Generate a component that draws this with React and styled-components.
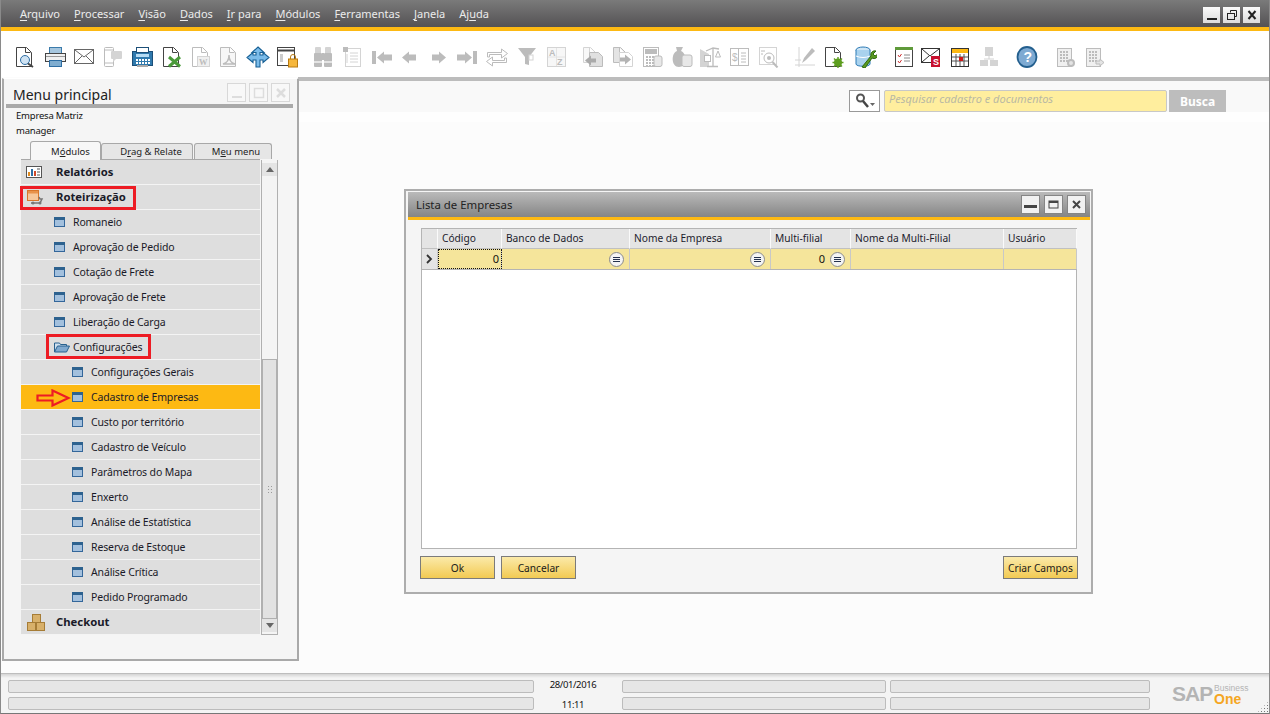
import React from "react";
import styled, { createGlobalStyle } from "styled-components";

const FONT = '"Noto Sans", "DejaVu Sans", sans-serif';

const Global = createGlobalStyle`
  html, body { margin: 0; padding: 0; background: #fff; overflow: hidden; }
  * { box-sizing: border-box; }
`;

const Win = styled.div`
  position: relative; width: 1270px; height: 714px; overflow: hidden;
  background: #fcfcfc; font-family: ${FONT}; font-size: 10.500px; color: #1c1c28;
  &::after {
    content: ""; position: absolute; inset: 0; pointer-events: none; z-index: 20;
    border-left: 1px solid #8a8a8a; border-right: 1px solid #8a8a8a; border-bottom: 1px solid #777;
  }
`;
const TitleBar = styled.div`
  position: absolute; left: 0; right: 0; top: 0; height: 31px;
  background: linear-gradient(#7a7a7a, #545254);
  border-bottom: 4px solid #fdb913;
`;
const MenuBar = styled.nav`
  position: absolute; left: 20px; top: 6px; display: flex; gap: 14px;
  color: #ececec; font-size: 11px; line-height: 16px;
  u { text-underline-offset: 2px; text-decoration-thickness: 1px; }
`;
const WinBtns = styled.div`
  position: absolute; right: 10px; top: 7px; display: flex; gap: 3px;
`;
const WinBtn = styled.div`
  width: 17px; height: 16px; background: linear-gradient(#fafafa, #dcdcdc);
  display: flex; align-items: center; justify-content: center;
`;
const Toolbar = styled.div`
  position: absolute; left: 0; right: 0; top: 31px; height: 46px; background: #fff;
`;
const Tool = styled.div`
  position: absolute; top: 13px; width: 24px; height: 24px; left: ${p => p.$x - 12}px;
  svg { display: block; }
`;
const Rule = styled.div`
  position: absolute; left: 298px; right: 1px; top: 77px; height: 4px; background: #bcbcbc;
`;
const SearchStrip = styled.div`
  position: absolute; left: 298px; right: 0; top: 81px; height: 41px;
  background: linear-gradient(#f9f9f9 31px, #fefefe 31px);
`;
const SearchBtn = styled.div`
  position: absolute; left: 849px; top: 90px; width: 31px; height: 22px; background: #fff;
  border: 1px solid #999; display: flex; align-items: center; justify-content: center;
`;
const SearchInput = styled.div`
  position: absolute; left: 884px; top: 90px; width: 283px; height: 22px; background: #ffee9e;
  border: 1px solid #c8c8c8; border-radius: 2px; color: #b9b9a4; font-style: italic; font-size: 11px;
  padding-left: 4px; line-height: 15px;
`;
const BuscaBtn = styled.div`
  position: absolute; left: 1169px; top: 90px; width: 57px; height: 22px; background: #bdbdbd;
  color: #fff; font-weight: 700; font-size: 12px; text-align: center; line-height: 23px;
`;

const Panel = styled.aside`
  position: absolute; left: 2px; top: 78px; width: 297px; height: 583px; background: #f5f5f5;
  border: 2px solid #a9a9a9; border-top-color: #fff; border-top-width: 1px;
`;
const PanelTitle = styled.div`
  position: absolute; left: 9px; top: 6px; font-size: 14px; line-height: 20px; color: #222;
`;
const PanelBtn = styled.div`
  position: absolute; top: 4px; left: ${p => p.$x}px; width: 19px; height: 19px;
  border: 1px solid #d8d8d8; background: #f8f8f8;
  display: flex; align-items: center; justify-content: center;
`;
const PanelRule = styled.div`
  position: absolute; left: 2px; width: 287px; top: 25px; height: 4px; background: #a9a9a9;
`;
const UserLine = styled.div`
  position: absolute; left: 12px; top: ${p => p.$y}px; font-size: 9.500px; letter-spacing: -0.2px; line-height: 14px; color: #111;
`;
const Tab = styled.div`
  position: absolute; left: ${p => p.$x}px; width: ${p => p.$w}px;
  top: ${p => (p.$active ? 62 : 64)}px; height: ${p => (p.$active ? 19 : 16)}px;
  background: ${p => (p.$active ? "#f7f7f7" : "#e6e6e6")};
  border: 1px solid #a8a8a8; border-bottom: none; border-radius: 3px 3px 0 0;
  text-align: center; font-size: 9.500px; line-height: 16px; color: #222; white-space: nowrap;
  padding-top: ${p => (p.$active ? 2 : 0)}px; padding-left: ${p => p.$pad}px;
  z-index: ${p => (p.$active ? 2 : 1)};
`;
const Tree = styled.div`
  position: absolute; left: 17px; top: 80px; width: 239px; height: 475px;
  border-top: 1px solid #a8a8a8; display: flex; flex-direction: column;
`;
const Row = styled.div`
  position: relative; height: 25px; flex: none;
  background: ${p => (p.$sel ? "#fdb913" : "#dedede")};
  border-bottom: 1px solid #f4f4f4;
  font-size: ${p => (p.$top ? "11.300px" : "10.500px")};
  letter-spacing: ${p => (p.$top ? "0" : "-0.13px")};
  font-weight: ${p => (p.$top ? 700 : 400)}; line-height: 24px;
  color: #1a1a28; white-space: nowrap;
  padding-left: ${p => p.$text}px;
`;
const RowIcon = styled.div`
  position: absolute; top: ${p => p.$top}px; left: ${p => p.$x}px;
  svg { display: block; }
`;
const Scroll = styled.div`
  position: absolute; left: 257px; top: 81px; width: 17px; height: 475px;
  background: #f4f4f4; border: 1px solid #b0b0b0; border-top: none;
`;
const ScrollArrow = styled.div`
  position: absolute; left: 0; width: 15px; height: 13px; background: #e4e4e4;
  top: ${p => (p.$down ? "auto" : "3px")}; bottom: ${p => (p.$down ? "2px" : "auto")};
  display: flex; align-items: center; justify-content: center;
`;
const Thumb = styled.div`
  position: absolute; left: 0; width: 15px; top: 199px; height: 260px; background: #e2e2e2;
  border: 1px solid #b0b0b0; display: flex; align-items: center; justify-content: center;
`;
const Grip = styled.div`
  width: 6px; height: 8px;
  background-image: radial-gradient(#9a9a9a 0.7px, transparent 0.8px);
  background-size: 3px 3px;
`;
const RedBox = styled.div`
  position: absolute; left: ${p => p.$x}px; top: ${p => p.$y}px; width: ${p => p.$w}px; height: ${p => p.$h}px;
  border: 3px solid #ed1c24; pointer-events: none; z-index: 5;
`;
const Arrow = styled.svg`
  position: absolute; left: 36px; top: 389px; z-index: 5;
`;

const Dialog = styled.section`
  position: absolute; left: 404px; top: 189px; width: 689px; height: 405px;
  background: #f5f5f5; border: 2px solid #adadad;
`;
const DlgHead = styled.div`
  position: absolute; left: 2px; right: 1px; top: 1px; height: 28px;
  background: linear-gradient(#bababa, #858585); border-bottom: 3px solid #fdb913;
  font-size: 11.400px; line-height: 25px; padding-left: 8px; color: #222;
`;
const DlgBtns = styled.div`
  position: absolute; right: 4px; top: 3px; display: flex; gap: 4px;
`;
const DlgBtn = styled.div`
  width: 19px; height: 19px; background: #f1f1f1; border: 1px solid #858585;
  display: flex; align-items: center; justify-content: center;
`;
const Grid = styled.div`
  position: absolute; left: 15px; top: 37px; width: 656px; height: 321px; background: #fff;
  border: 1px solid #b4b4b4;
`;
const COLS = "16px 64px 128px 141px 80px 153px 73px";
const HeadRow = styled.div`
  display: grid; grid-template-columns: ${COLS}; height: 20px;
`;
const HeadCell = styled.div`
  background: #e4e4e4; border-right: 1px solid #fafafa; border-bottom: 1px solid #c0c0c0;
  font-size: 10.200px; line-height: 18px; padding-left: 4px; color: #1c1c2c; white-space: nowrap;
`;
const DataRow = styled.div`
  display: grid; grid-template-columns: ${COLS}; height: 21px; border-bottom: 1px solid #b4b4b4;
`;
const Cell = styled.div`
  position: relative; background: #f5e59b; border-right: 1px solid #c8c8c8;
  font-size: 11px; line-height: 19px; text-align: right; color: #111; padding-right: ${p => p.$pad || 2}px;
  ${p => p.$focus && "outline: 1px dotted #111; outline-offset: -1px;"}
`;
const HeadMark = styled(Cell)`
  background: #e4e4e4; display: flex; align-items: center; justify-content: center; padding: 0;
`;
const Picker = styled.div`
  position: absolute; right: 5px; top: 3px; width: 15px; height: 15px; border-radius: 50%;
  background: #f4f4f4; border: 1px solid #8a8a8a;
  display: flex; flex-direction: column; align-items: center; justify-content: center; gap: 1px;
  i { display: block; width: 7px; height: 1px; background: #26334f; }
`;
const Btn = styled.div`
  position: absolute; left: ${p => p.$x}px; top: 365px; width: ${p => p.$w}px; height: 23px;
  background: linear-gradient(#fbeaa9, #f2ca53); border: 1px solid #7b7b7b;
  font-size: 10.200px; line-height: 22px; text-align: center; color: #1a1a1a; white-space: nowrap;
`;

const Status = styled.footer`
  position: absolute; left: 0; right: 0; top: 673px; bottom: 0;
  background: linear-gradient(#d4d4d4, #f4f4f4 4px); border-top: 1px solid #bdbdbd;
`;
const Seg = styled.div`
  position: absolute; left: ${p => p.$x}px; width: ${p => p.$w}px; top: ${p => p.$y}px; height: 13px;
  background: #e6e6e6; border: 1px solid #bcbcbc; border-radius: 2px;
`;
const Stamp = styled.div`
  position: absolute; left: 534px; width: 78px; top: ${p => p.$y}px; text-align: center;
  font-size: 9.500px; letter-spacing: -0.4px; line-height: 12px; color: #111;
`;
const Logo = styled.div`
  position: absolute; left: 1172px; top: 10px; width: 80px; height: 22px;
`;
const LogoSap = styled.span`
  position: absolute; left: 0; top: -1px; font-family: "Liberation Sans", sans-serif; font-weight: 700;
  font-size: 21px; line-height: 22px; color: #b4b4b4; letter-spacing: -1px;
`;
const LogoBiz = styled.span`
  position: absolute; left: 42px; top: 0; font-family: "Liberation Sans", sans-serif; font-size: 8.500px; line-height: 9px; color: #b4b4b4;
`;
const LogoOne = styled.span`
  position: absolute; left: 42px; top: 9px; font-family: "Liberation Sans", sans-serif; font-weight: 700; font-size: 14px; line-height: 12px; color: #f5a623;
`;
const ResizeGrip = styled.div`
  position: absolute; right: 1px; bottom: 1px; width: 12px; height: 12px;
  background-image: radial-gradient(#777 0.6px, transparent 0.7px); background-size: 3px 3px;
  clip-path: polygon(100% 0, 100% 100%, 0 100%);
`;

const G = "#bcbcbc";
const L = "#d4d4d4";
const S = ({ children, w = 24, h = 24, vb }) => (
  <svg width={w} height={h} viewBox={vb || `0 0 ${w} ${h}`} fill="none">{children}</svg>
);
const Doc = ({ c = "#444", x = 3, w = 15, h = 19, y = 3, f = "#fff" }) => (
  <path d={`M${x + .5} ${y + .5}h${w - 5}l5 5v${h - 5}h-${w}z M${x + w - 5.5} ${y + .5}v5h5`} stroke={c} fill={f} />
);
const GridDots = ({ x, y, c = G, n = 3, m = 4 }) => (
  <g fill={c}>{Array.from({ length: n * m }, (_, i) => <rect key={i} x={x + (i % n) * 3} y={y + Math.floor(i / n) * 3} width="2" height="2" />)}</g>
);

const icons = {
  searchDoc: <><Doc /><circle cx="12" cy="16" r="4.500" stroke="#2d6da3" fill="#cfe3f3" /><path d="M15 19.500l5 3.500" stroke="#444" strokeWidth="2" /></>,
  print: <><rect x="6.500" y="3.500" width="12" height="6" fill="#a6c6de" stroke="#3b7bab" /><rect x="2.500" y="9.500" width="20" height="8" fill="#f0f0f0" stroke="#444" /><rect x="6.500" y="16.500" width="12" height="6" fill="#7fadd0" stroke="#2d6da3" /><path d="M3 12.500h19" stroke="#999" /></>,
  mail: <><rect x="2.500" y="5.500" width="19" height="14" fill="#fff" stroke="#666" /><path d="M3 6l9 7 9-7M3 19l7-7M21 19l-7-7" stroke="#666" /></>,
  phone: <><rect x="3.500" y="3.500" width="9" height="19" rx="1" fill="#fff" stroke={G} /><path d="M4 6h8M4 19h8" stroke={G} /><rect x="10" y="7" width="11" height="8" rx="1" fill={L} /><path d="M12 15v3l3-3" fill={L} /></>,
  fax: <><rect x="2.500" y="7.500" width="20" height="14" fill="#2f79ad" stroke="#1c4f78" /><rect x="6.500" y="3.500" width="12" height="5" fill="#fff" stroke="#1c4f78" /><rect x="6" y="10" width="13" height="3" fill="#b7dcf4" /><GridDots x={6} y={15} c="#fff" n={5} m={2} /><rect x="7" y="21" width="11" height="2" fill="#aaa" /></>,
  excel: <><Doc /><path d="M9 13l11 9.500M20 13L9 22.500" stroke="#4a9a3a" strokeWidth="3" /></>,
  word: <><Doc c={G} /><rect x="8.500" y="12.500" width="12" height="10" fill="#f0f0f0" stroke={L} /><text x="10" y="21" fontSize="8.500" fontWeight="700" fontFamily="Liberation Serif, serif" fill={G}>W</text></>,
  pdf: <><Doc c={G} f="#f7f7f7" /><path d="M6 20c4-1 6-5 6-9 0 4 2 8 6 9-4 0-8 0-12 0z" stroke={G} strokeWidth="1.500" fill="none" /></>,
  arrows: <><path d="M12 3l6 5.500h-4V11h3V8.500l6 5-6 5V16h-3v7h-4v-7H7v2.500l-6-5 6-5V11h3V8.500H6z" fill="#7bbcea" stroke="#165f94" strokeWidth="1.100" /></>,
  lockWin: <><rect x="2.500" y="3.500" width="17" height="18" fill="#fff" stroke="#444" /><path d="M3 6.500h16" stroke="#444" strokeWidth="2" /><rect x="5" y="10" width="3" height="8" fill="#ccc" /><rect x="13.500" y="15" width="9" height="8" fill="#f6b73c" stroke="#b97a10" /><path d="M15.500 15v-2a2.500 2.500 0 015 0v2" stroke="#b97a10" /></>,
  binoc: <><rect x="4" y="3" width="6" height="8" rx="1" fill={L} /><rect x="14" y="3" width="6" height="8" rx="1" fill={L} /><rect x="3" y="9" width="8" height="14" rx="1" fill={G} /><rect x="13" y="9" width="8" height="14" rx="1" fill={G} /><rect x="11" y="9" width="2" height="7" fill={G} /><rect x="3" y="17" width="8" height="2" fill="#e4e4e4" /><rect x="13" y="17" width="8" height="2" fill="#e4e4e4" /></>,
  list: <><rect x="5.500" y="4.500" width="15" height="18" fill="#fff" stroke={L} /><rect x="3" y="3" width="5" height="5" fill={G} /><path d="M10 9h8M10 12h8M10 15h8M10 18h8M7 10v9" stroke={L} /></>,
  first: <><rect x="2" y="7" width="4" height="13" fill={G} /><path d="M7 13.500l7-6v3h8v6h-8v3z" fill={G} /></>,
  prev: <path d="M5 13.500l7-6v3h7v6h-7v3z" fill={G} />,
  next: <path d="M19 13.500l-7-6v3H5v6h7v3z" fill={G} />,
  last: <><rect x="18" y="7" width="4" height="13" fill={G} /><path d="M17 13.500l-7-6v3H2v6h8v3z" fill={G} /></>,
  swap: <><path d="M2.500 13V8.500h14V5l6 4.500-6 4.500v-3.500h-12V13z" fill="#fff" stroke={G} /><path d="M21.500 14v4.500h-14V22l-6-4.500 6-4.500v3.500h12V14z" fill="#fff" stroke={G} /></>,
  filter: <><path d="M3 4h18l-7 9v8l-4-1v-7z" fill={G} /><rect x="14" y="11" width="4" height="5" fill="#fff" stroke={L} /></>,
  sort: <><rect x="3.500" y="3.500" width="18" height="19" fill="#f7f7f7" stroke={L} /><path d="M12.500 4v18M4 13h17" stroke="#e4e4e4" /><text x="5" y="12" fontSize="9" fontWeight="700" fontFamily="Liberation Sans, sans-serif" fill={G}>A</text><text x="13" y="21" fontSize="9" fontWeight="700" fontFamily="Liberation Sans, sans-serif" fill={G}>Z</text></>,
  copyL: <><Doc c={L} x={2} w={12} h={15} f="#f8f8f8" /><path d="M8.500 8.500h9l4 4v10h-13z" fill="#e0e0e0" stroke={G} /><path d="M4 16.500l6-5v3h5v4h-5v3z" fill="#aaa" /></>,
  copyR: <><Doc c={G} x={2} w={12} h={15} f="#e4e4e4" /><path d="M8.500 8.500h9l4 4v10h-13z" fill="#fff" stroke={L} /><path d="M20 15.500l-6-5v3H9v4h5v3z" fill="#b4b4b4" /></>,
  calc: <><rect x="3.500" y="3.500" width="15" height="19" fill="#fff" stroke={G} /><rect x="5" y="5" width="12" height="5" fill={G} /><GridDots x={6} y={12} /><rect x="14" y="12" width="8" height="10.500" rx="2" fill="#e8e8e8" stroke={G} /></>,
  coins: <><path d="M6 3l7 0-2 4c6 2 6 16-2 16-8 0-8-14-2-16z" fill={G} /><rect x="12" y="11" width="10" height="11.500" rx="2" fill="#e8e8e8" stroke={G} /></>,
  scale: <><path d="M2 5l9 5v13H2z" fill={L} /><path d="M8 7l7-3 6 1M15 4v18M9 22.500h11" stroke={G} strokeWidth="1.300" /><rect x="6.500" y="11.500" width="6" height="6" fill="#fff" stroke={G} /><path d="M17.500 13l2.500-6 2.500 6z" fill="#fff" stroke={G} /></>,
  dollar: <><rect x="3.500" y="4.500" width="18" height="17" fill="#fff" stroke={G} /><path d="M11.500 5v16M14 9h5M14 12h5M14 15h5M14 18h5" stroke={G} /><text x="5" y="17" fontSize="10" fontFamily="Liberation Sans, sans-serif" fill={G}>$</text></>,
  audit: <><rect x="3.500" y="3.500" width="17" height="17" fill="#fff" stroke={L} /><circle cx="13" cy="14" r="5" stroke={G} /><circle cx="13" cy="14" r="2" fill={G} /><path d="M16.500 18l5 5.500" stroke={G} strokeWidth="2" /><path d="M5 7h4M5 10h2" stroke={G} /></>,
  pencil: <><path d="M6 3v20M2 21h20M2 16h6" stroke={L} /><path d="M9 19l2-5L19 4l3 3-9 9z" fill={G} /></>,
  docGear: <><Doc c="#444" /><circle cx="16" cy="18.500" r="4" fill="#5d9e1f" /><circle cx="16" cy="18.500" r="1.500" fill="#fff" /><path d="M16 13v11M10.500 18.500h11M12 14.500l8 8M20 14.500l-8 8" stroke="#5d9e1f" strokeWidth="1.400" /></>,
  dbWrench: <><ellipse cx="10" cy="6" rx="7" ry="3" fill="#cfe6f6" stroke="#2d7ab5" /><path d="M3 6v14c0 3 14 3 14 0V6" fill="#a9d2ee" stroke="#2d7ab5" /><path d="M3 12c4 2 10 2 14 0" stroke="#fff" /><path d="M9 23l9-11a4 4 0 015-5l-3 3 2 2 3-2a4 4 0 01-6 4l-7 10z" fill="#5c9a22" stroke="#2f6a10" /></>,
  check: <><rect x="4.500" y="4.500" width="17" height="18" fill="#fff" stroke="#444" /><rect x="4" y="3" width="18" height="3" fill="#5f9a3a" /><path d="M7 11l1.500 2 2-3M7 17l1.500 2 2-3" stroke="#c33" /><path d="M13 11h6M13 14h6M13 17h6" stroke="#888" /></>,
  mailRed: <><rect x="2.500" y="4.500" width="18" height="14" fill="#fff" stroke="#333" /><path d="M3 5l8 7 9-7M3 18l7-6" stroke="#333" /><rect x="12" y="12" width="9" height="11" fill="#c8102e" /><text x="14" y="21" fontSize="9" fontWeight="700" fontFamily="Liberation Sans, sans-serif" fill="#fff">S</text></>,
  cal: <><rect x="3.500" y="4.500" width="17" height="18" fill="#fff" stroke="#333" /><rect x="4" y="5" width="16" height="4" fill="#fdb913" /><path d="M4 13h16M4 17h16M8 10v12M12 10v12M16 10v12" stroke="#555" /><rect x="11" y="13" width="4" height="4" fill="#d01818" /></>,
  tree: <><rect x="8" y="3" width="8" height="9" fill={L} /><path d="M12 12v3M7 15h10" stroke={L} /><rect x="3" y="16" width="8" height="6" fill={L} /><rect x="13" y="16" width="8" height="6" fill={L} /></>,
  help: <><ellipse cx="12" cy="13" rx="9.500" ry="10" fill="#7eaad2" stroke="#235f8e" strokeWidth="1.800" /><text x="8.500" y="18" fontSize="14" fontWeight="700" fontFamily="Liberation Sans, sans-serif" fill="#fff">?</text></>,
  sheetGear: <><rect x="4.500" y="4.500" width="14" height="18" fill="#f0f0f0" stroke={G} /><GridDots x={7} y={7} /><circle cx="18" cy="19" r="3" fill="#e4e4e4" stroke={G} strokeWidth="2" /></>,
  sheetArrow: <><rect x="4.500" y="4.500" width="14" height="18" fill="#f0f0f0" stroke={G} /><GridDots x={7} y={7} /><path d="M14 17h4v-2l4 3.500-4 3.500v-2h-4z" fill="#e4e4e4" stroke={G} /></>,
};

const tools = [
  [25, "searchDoc"], [55, "print"], [84, "mail"], [113, "phone"], [142, "fax"], [172, "excel"], [201, "word"], [229, "pdf"],
  [258, "arrows"], [287, "lockWin"], [323, "binoc"], [352, "list"], [382, "first"], [409, "prev"], [439, "next"], [467, "last"],
  [497, "swap"], [527, "filter"], [556, "sort"], [593, "copyL"], [623, "copyR"], [652, "calc"], [682, "coins"], [710, "scale"],
  [739, "dollar"], [768, "audit"], [805, "pencil"], [834, "docGear"], [865, "dbWrench"], [903, "check"], [931, "mailRed"],
  [960, "cal"], [989, "tree"], [1027, "help"], [1065, "sheetGear"], [1094, "sheetArrow"],
];

const FormIcon = () => (
  <S w={11} h={10}><rect x=".5" y=".5" width="10" height="9" fill="#a3c0dd" stroke="#33669a" /><rect x="0" y="0" width="11" height="3" fill="#2d628f" /></S>
);
const FolderIcon = () => (
  <S w={16} h={12}><path d="M.5 11V2h5l1 1.500h6V6" fill="#cfe0ef" stroke="#27618f" /><path d="M.5 11l3-6h12l-3 6z" fill="#7fa9cf" stroke="#27618f" /></S>
);
const ReportIcon = () => (
  <S w={16} h={12}><rect x=".5" y=".5" width="15" height="11" fill="#fff" stroke="#555" /><rect x="2" y="6" width="2" height="4" fill="#e08a1e" /><rect x="5" y="3" width="2" height="7" fill="#2d6da3" /><rect x="8" y="5" width="2" height="5" fill="#d04a2a" /><path d="M11 3h3M11 6h3M11 9h3" stroke="#555" /></S>
);
const RouteIcon = () => (
  <S w={18} h={15}><rect x=".5" y=".5" width="11" height="10" fill="#f6c79a" stroke="#d8762a" /><rect x="1" y="1" width="10" height="2.500" fill="#e8924a" /><path d="M4 13h9l2-4-2 0-1-2" stroke="#777" strokeWidth="1.500" /><circle cx="6" cy="13" r="1.500" fill="#777" /><circle cx="13" cy="13" r="1.500" fill="#777" /></S>
);
const BoxIcon = () => (
  <S w={18} h={17}><rect x="5.500" y=".5" width="8" height="8" fill="#d8b06a" stroke="#a67c36" /><rect x=".5" y="8.500" width="8" height="8" fill="#d8b06a" stroke="#a67c36" /><rect x="9.500" y="8.500" width="8" height="8" fill="#d8b06a" stroke="#a67c36" /></S>
);

const rows = [
  { t: "Relatórios", top: true, icon: <ReportIcon />, ix: 5, it: 6 },
  { t: "Roteirização", top: true, icon: <RouteIcon />, ix: 6, it: 5 },
  { t: "Romaneio", lvl: 1 }, { t: "Aprovação de Pedido", lvl: 1 }, { t: "Cotação de Frete", lvl: 1 },
  { t: "Aprovação de Frete", lvl: 1 }, { t: "Liberação de Carga", lvl: 1 },
  { t: "Configurações", lvl: 1, icon: <FolderIcon />, ix: 33, it: 6 },
  { t: "Configurações Gerais", lvl: 2 }, { t: "Cadastro de Empresas", lvl: 2, sel: true },
  { t: "Custo por território", lvl: 2 }, { t: "Cadastro de Veículo", lvl: 2 }, { t: "Parâmetros do Mapa", lvl: 2 },
  { t: "Enxerto", lvl: 2 }, { t: "Análise de Estatística", lvl: 2 }, { t: "Reserva de Estoque", lvl: 2 },
  { t: "Análise Crítica", lvl: 2 }, { t: "Pedido Programado", lvl: 2 },
  { t: "Checkout", top: true, icon: <BoxIcon />, ix: 6, it: 4 },
];

const TEXT = { 1: 52, 2: 70 };
const ICONX = { 1: 33, 2: 51 };

export default function App() {
  return (
    <Win>
      <Global />
      <TitleBar>
        <MenuBar>
          {["Arquivo", "Processar", "Visão", "Dados", "Ir para", "Módulos", "Ferramentas", "Janela"].map(m => (
            <span key={m}><u>{m[0]}</u>{m.slice(1)}</span>
          ))}
          <span>Aj<u>u</u>da</span>
        </MenuBar>
        <WinBtns>
          <WinBtn><S w={12} h={12}><rect x="1" y="9" width="10" height="2" fill="#222" /></S></WinBtn>
          <WinBtn><S w={12} h={12}><path d="M4.500 3.500V1.500h6v6h-2" stroke="#222" /><rect x="1.500" y="4.500" width="7" height="6" stroke="#222" /></S></WinBtn>
          <WinBtn><S w={12} h={12}><path d="M2.500 2l7 8M9.500 2l-7 8" stroke="#222" strokeWidth="2" /></S></WinBtn>
        </WinBtns>
      </TitleBar>

      <Toolbar>
        {tools.map(([x, k]) => <Tool key={k} $x={x}><S>{icons[k]}</S></Tool>)}
      </Toolbar>
      <Rule />
      <SearchStrip />
      <SearchBtn>
        <S w={20} h={16}><circle cx="5.500" cy="5" r="3.500" stroke="#555" strokeWidth="2" /><path d="M8 8l5 6" stroke="#444" strokeWidth="2.500" /><path d="M15 10h5l-2.500 3z" fill="#666" /></S>
      </SearchBtn>
      <SearchInput>Pesquisar cadastro e documentos</SearchInput>
      <BuscaBtn>Busca</BuscaBtn>

      <Panel>
        <PanelTitle>Menu principal</PanelTitle>
        <PanelBtn $x={223}><S w={14} h={14}><rect x="2" y="10" width="10" height="2" fill="#ddd" /></S></PanelBtn>
        <PanelBtn $x={245}><S w={14} h={14}><rect x="2.500" y="2.500" width="9" height="9" stroke="#ddd" strokeWidth="1.500" /></S></PanelBtn>
        <PanelBtn $x={267}><S w={14} h={14}><path d="M3 3l8 8M11 3l-8 8" stroke="#ddd" strokeWidth="2.500" /></S></PanelBtn>
        <PanelRule />
        <UserLine $y={30}>Empresa Matriz</UserLine>
        <UserLine $y={45}>manager</UserLine>
        <Tab $active $x={26} $w={71} $pad={10}>M<u>ó</u>dulos</Tab>
        <Tab $x={97} $w={92} $pad={8}>D<u>r</u>ag &amp; Relate</Tab>
        <Tab $x={190} $w={78} $pad={6}>M<u>e</u>u menu</Tab>
        <Tree>
          {rows.map(r => (
            <Row key={r.t} $top={r.top} $sel={r.sel} $text={r.top ? 35 : TEXT[r.lvl]}>
              <RowIcon $x={r.icon ? r.ix : ICONX[r.lvl]} $top={r.icon ? r.it : 7}>{r.icon || <FormIcon />}</RowIcon>
              {r.t}
            </Row>
          ))}
        </Tree>
        <Scroll>
          <ScrollArrow><S w={8} h={5}><path d="M4 0l4 5H0z" fill="#666" /></S></ScrollArrow>
          <Thumb><Grip /></Thumb>
          <ScrollArrow $down><S w={8} h={5}><path d="M4 5l4-5H0z" fill="#666" /></S></ScrollArrow>
        </Scroll>
      </Panel>
      <RedBox $x={20} $y={186} $w={116} $h={24} />
      <RedBox $x={46} $y={334} $w={105} $h={25} />
      <Arrow width="35" height="18" viewBox="0 0 35 18">
        <path d="M1.500 6.500h15V1.500l16 7.500-16 7.500v-5h-15z" fill="#fdb913" stroke="#ed1c24" strokeWidth="2.200" />
      </Arrow>

      <Dialog>
        <DlgHead>Lista de Empresas
          <DlgBtns>
            <DlgBtn><S w={13} h={13}><rect x="0" y="7" width="13" height="3" fill="#444" /></S></DlgBtn>
            <DlgBtn><S w={13} h={13}><rect x="2" y="3" width="9" height="7" stroke="#444" /><rect x="2" y="3" width="9" height="2" fill="#444" /></S></DlgBtn>
            <DlgBtn><S w={13} h={13}><path d="M3 3l7 7M10 3l-7 7" stroke="#444" strokeWidth="2" /></S></DlgBtn>
          </DlgBtns>
        </DlgHead>
        <Grid>
          <HeadRow>
            <HeadCell />
            <HeadCell>Código</HeadCell>
            <HeadCell>Banco de Dados</HeadCell>
            <HeadCell>Nome da Empresa</HeadCell>
            <HeadCell>Multi-filial</HeadCell>
            <HeadCell>Nome da Multi-Filial</HeadCell>
            <HeadCell>Usuário</HeadCell>
          </HeadRow>
          <DataRow>
            <HeadMark><S w={7} h={10}><path d="M1 1l4 4-4 4" stroke="#333" strokeWidth="1.800" /></S></HeadMark>
            <Cell $focus>0</Cell>
            <Cell><Picker><i /><i /><i /></Picker></Cell>
            <Cell><Picker><i /><i /><i /></Picker></Cell>
            <Cell $pad={25}>0<Picker><i /><i /><i /></Picker></Cell>
            <Cell />
            <Cell />
          </DataRow>
        </Grid>
        <Btn $x={14} $w={75}>Ok</Btn>
        <Btn $x={95} $w={75}>Cancelar</Btn>
        <Btn $x={597} $w={75}>Criar Campos</Btn>
      </Dialog>

      <Status>
        <Seg $x={8} $w={526} $y={6} />
        <Seg $x={8} $w={526} $y={23} />
        <Stamp $y={5}>28/01/2016</Stamp>
        <Stamp $y={25}>11:11</Stamp>
        <Seg $x={622} $w={264} $y={6} />
        <Seg $x={622} $w={264} $y={23} />
        <Seg $x={890} $w={260} $y={6} />
        <Seg $x={890} $w={260} $y={23} />
        <Logo>
          <LogoSap>SAP</LogoSap>
          <LogoBiz>Business</LogoBiz>
          <LogoOne>One</LogoOne>
        </Logo>
        <ResizeGrip />
      </Status>
    </Win>
  );
}
